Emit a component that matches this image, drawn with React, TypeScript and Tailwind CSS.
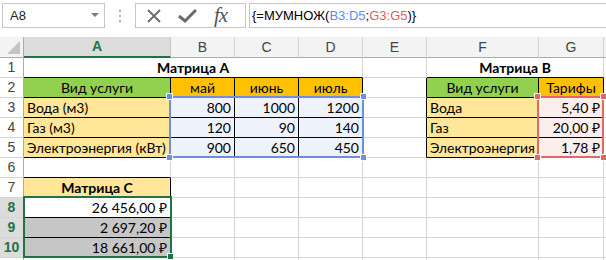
import React from "react";

type C = { t?: string; bg?: string; a?: "l" | "c" | "r"; b?: boolean; span?: number };

const GR = "bg-[#92d050]";
const OR = "bg-[#ffc000]";
const YE = "bg-[#ffe699]";
const BL = "bg-[#eef2fb]";
const PK = "bg-[#fdeeee]";
const SE = "bg-[#c6c6c6]";

const rows: C[][] = [
  [{ t: "Матрица А", b: true, a: "c", span: 4 }, {}, { t: "Матрица В", b: true, a: "c", span: 2 }, {}],
  [
    { t: "Вид услуги", bg: GR, a: "c" },
    { t: "май", bg: OR, a: "c" },
    { t: "июнь", bg: OR, a: "c" },
    { t: "июль", bg: OR, a: "c" },
    {},
    { t: "Вид услуги", bg: GR, a: "c" },
    { t: "Тарифы", bg: OR, a: "c" },
    {},
  ],
  [
    { t: "Вода (м3)", bg: YE, a: "l" },
    { t: "800", bg: BL, a: "r" },
    { t: "1000", bg: BL, a: "r" },
    { t: "1200", bg: BL, a: "r" },
    {},
    { t: "Вода", bg: YE, a: "l" },
    { t: "5,40 ₽", bg: PK, a: "r" },
    {},
  ],
  [
    { t: "Газ (м3)", bg: YE, a: "l" },
    { t: "120", bg: BL, a: "r" },
    { t: "90", bg: BL, a: "r" },
    { t: "140", bg: BL, a: "r" },
    {},
    { t: "Газ", bg: YE, a: "l" },
    { t: "20,00 ₽", bg: PK, a: "r" },
    {},
  ],
  [
    { t: "Электроэнергия (кВт)", bg: YE, a: "l" },
    { t: "900", bg: BL, a: "r" },
    { t: "650", bg: BL, a: "r" },
    { t: "450", bg: BL, a: "r" },
    {},
    { t: "Электроэнергия", bg: YE, a: "l" },
    { t: "1,78 ₽", bg: PK, a: "r" },
    {},
  ],
  [{}, {}, {}, {}, {}, {}, {}, {}],
  [{ t: "Матрица С", b: true, a: "c", bg: YE }, {}, {}, {}, {}, {}, {}, {}],
  [{ t: "26 456,00 ₽", a: "r" }, {}, {}, {}, {}, {}, {}, {}],
  [{ t: "2 697,20 ₽", a: "r", bg: SE }, {}, {}, {}, {}, {}, {}, {}],
  [{ t: "18 661,00 ₽", a: "r", bg: SE }, {}, {}, {}, {}, {}, {}, {}],
];

function boxed(r: number, c: number) {
  if (r >= 2 && r <= 5 && c >= 1 && c <= 4) return true;
  if (r >= 2 && r <= 5 && (c === 6 || c === 7)) return true;
  if (r >= 7 && r <= 10 && c === 1) return true;
  return false;
}

const spanCls: Record<number, string> = { 1: "", 2: "col-span-2", 4: "col-span-4" };
const colLetters = ["A", "B", "C", "D", "E", "F", "G"];

function Handle({ cls }: { cls: string }) {
  return <div className={"absolute w-[7px] h-[7px] border border-white " + cls} />;
}

export default function App() {
  const cellFont = "font-[family-name:Lato,'Liberation_Sans',sans-serif] text-[14px] text-black";
  const uiFont = "font-[family-name:'Liberation_Sans',Arial,sans-serif]";
  return (
    <div className="w-[606px] h-[260px] bg-white overflow-hidden relative">
      {/* formula bar */}
      <div className={"flex items-start h-[37px] pt-[3px] " + uiFont}>
        <div className="ml-[2px] w-[103px] h-[25px] border border-[#c6c6c6] flex items-center justify-between pl-[7px] pr-[5px]">
          <span className="text-[13px] text-[#222]">A8</span>
          <svg width="8" height="5" viewBox="0 0 8 5">
            <path d="M0 0 L8 0 L4 4 Z" fill="#7a7a7a" />
          </svg>
        </div>
        <div className="w-[30px] h-[25px] flex flex-col items-center justify-center gap-[3px]">
          <div className="w-[2px] h-[2px] bg-[#b0b0b0]" />
          <div className="w-[2px] h-[2px] bg-[#b0b0b0]" />
          <div className="w-[2px] h-[2px] bg-[#b0b0b0]" />
        </div>
        <div className="w-[111px] h-[25px] border border-[#c6c6c6] flex items-center pl-[11px] gap-[17px]">
          <svg width="14" height="14" viewBox="0 0 14 14">
            <path d="M1 1 L13 13 M13 1 L1 13" stroke="#6a6a6a" strokeWidth="1.8" fill="none" />
          </svg>
          <svg width="19" height="15" viewBox="0 0 19 15">
            <path d="M1 8 L7 13 L18 2" stroke="#6a6a6a" strokeWidth="3" fill="none" strokeLinejoin="miter" />
          </svg>
          <span className="font-[family-name:'Liberation_Serif',serif] italic text-[21px] leading-none text-[#555] tracking-[-1px]">fx</span>
        </div>
        <div className="ml-[3px] flex-1 h-[25px] border border-r-0 border-[#c6c6c6] flex items-center pl-[2px]">
          <span className="text-[13px] text-black whitespace-nowrap">
            {"{=МУМНОЖ("}
            <span className="text-[#5b8def]">B3:D5</span>
            {";"}
            <span className="text-[#e05d5d]">G3:G5</span>
            {")}"}
          </span>
        </div>
      </div>

      {/* sheet */}
      <div className="grid grid-cols-[24px_147px_64px_64px_64px_64px_112px_65px_2px]">
        {/* column header */}
        <div className="h-[21px] bg-[#f3f3f3] border-r border-b border-[#ababab] relative">
          <svg className="absolute right-[3px] bottom-[3px]" width="13" height="13" viewBox="0 0 13 13">
            <path d="M13 0 L13 13 L0 13 Z" fill="#c4c4c4" />
          </svg>
        </div>
        {colLetters.map((l, i) =>
          i === 0 ? (
            <div
              key={l}
              className={"h-[21px] bg-[#dcdcdc] border-r border-r-[#c6c6c6] border-b-2 border-b-[#217346] flex items-center justify-center text-[14px] font-bold text-[#217346] " + uiFont}
            >
              {l}
            </div>
          ) : (
            <div
              key={l}
              className={"h-[21px] bg-[#f3f3f3] border-r border-r-[#d4d4d4] border-b border-b-[#ababab] flex items-center justify-center text-[14px] text-[#444] " + uiFont}
            >
              {l}
            </div>
          )
        )}
        <div className="h-[21px] bg-[#f3f3f3] border-b border-b-[#ababab]" />

        {rows.map((cells, ri) => {
          const r = ri + 1;
          const sel = r >= 8;
          let col = 1;
          const out: React.ReactNode[] = [];
          out.push(
            <div
              key={"h" + r}
              className={
                "h-[20px] border-r border-r-[#ababab] border-b border-b-[#d4d4d4] flex items-center justify-center text-[14px] " +
                uiFont +
                (sel ? " bg-[#dcdcdc] text-[#217346] font-bold" : " bg-white text-[#444]")
              }
            >
              {r}
            </div>
          );
          cells.forEach((cd, ci) => {
            const span = cd.span ?? 1;
            const start = col;
            const end = col + span - 1;
            col += span;
            if (start === 8) {
              out.push(<div key={r + "-" + ci} className="h-[20px] border-b border-b-[#d4d4d4]" />);
              return;
            }
            const rb = boxed(r, end) || boxed(r, end + 1);
            let bb = false;
            for (let c = start; c <= end; c++) if (boxed(r, c) || boxed(r + 1, c)) bb = true;
            const align = cd.a === "c" ? "justify-center" : cd.a === "r" ? "justify-end pr-[3px]" : "justify-start pl-[3px]";
            out.push(
              <div
                key={r + "-" + ci}
                className={
                  "h-[20px] border-r border-b flex items-center whitespace-nowrap leading-[19px] " +
                  (spanCls[span] || "") +
                  " " +
                  (rb ? "border-r-black " : "border-r-[#d4d4d4] ") +
                  (bb ? "border-b-black " : "border-b-[#d4d4d4] ") +
                  (cd.bg || "bg-white") +
                  " " +
                  align +
                  " " +
                  cellFont +
                  (cd.b ? " font-bold" : "")
                }
              >
                {cd.t}
              </div>
            );
          });
          return <React.Fragment key={r}>{out}</React.Fragment>;
        })}
        {/* partial next row */}
        <div className="h-[2px] border-r border-r-[#ababab] bg-white" />
        {[0, 1, 2, 3, 4, 5, 6].map((i) => (
          <div key={"p" + i} className="h-[2px] border-r border-r-[#d4d4d4]" />
        ))}
        <div className="h-[2px]" />
      </div>

      {/* reference highlight B3:D5 */}
      <div className="absolute left-[169px] top-[96px] w-[195px] h-[62px] border-2 border-[#6d8fe0] pointer-events-none">
        <Handle cls="bg-[#6d8fe0] -left-[5px] -top-[5px]" />
        <Handle cls="bg-[#6d8fe0] -right-[5px] -top-[5px]" />
        <Handle cls="bg-[#6d8fe0] -left-[5px] -bottom-[5px]" />
        <Handle cls="bg-[#6d8fe0] -right-[5px] -bottom-[5px]" />
      </div>
      {/* reference highlight G3:G5 */}
      <div className="absolute left-[537px] top-[96px] w-[67px] h-[62px] border-2 border-[#e46767] pointer-events-none">
        <Handle cls="bg-[#e46767] -left-[5px] -top-[5px]" />
        <Handle cls="bg-[#e46767] -right-[5px] -top-[5px]" />
        <Handle cls="bg-[#e46767] -left-[5px] -bottom-[5px]" />
        <Handle cls="bg-[#e46767] -right-[5px] -bottom-[5px]" />
      </div>
      {/* selection A8:A10 */}
      <div className="absolute left-[23px] top-[196px] w-[149px] h-[62px] border-2 border-[#217346] pointer-events-none">
        <div className="absolute -right-[4px] -bottom-[4px] w-[7px] h-[7px] bg-[#217346] border border-white" />
      </div>
    </div>
  );
}
